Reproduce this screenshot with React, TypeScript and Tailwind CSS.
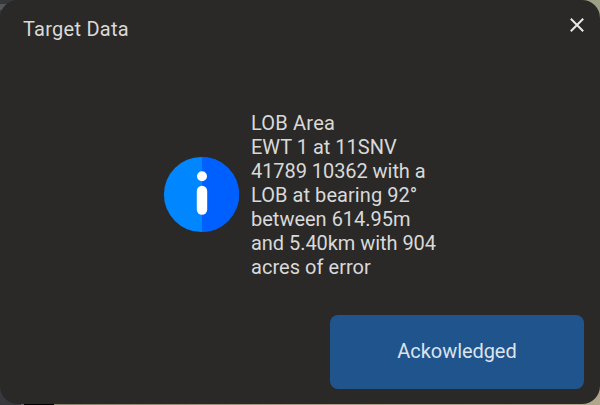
function InfoIcon() {
  return (
    <svg className="block h-[76px] w-[76px] shrink-0" viewBox="0 0 76 76">
      <circle cx="38.4" cy="37.5" r="37.5" fill="#0086ff" />
      <path d="M39 0a37.2 37.5 0 0 1 0 75z" fill="#005fff" />
      <circle cx="39" cy="19.2" r="5" fill="#fff" />
      <rect x="33.8" y="28.8" width="10.4" height="29" rx="5.2" fill="#fff" />
    </svg>
  );
}

const lines = [
  { text: "LOB Area", tracking: "tracking-[0.2px]" },
  { text: "EWT 1 at 11SNV", tracking: "tracking-normal" },
  { text: "41789 10362 with a", tracking: "tracking-[-0.06px]" },
  { text: "LOB at bearing 92°", tracking: "tracking-[0.06px]" },
  { text: "between 614.95m", tracking: "tracking-normal" },
  { text: "and 5.40km with 904", tracking: "tracking-[-0.05px]" },
  { text: "acres of error", tracking: "tracking-[0.04px]" },
];

function Backdrop() {
  return (
    <div className="absolute inset-0 flex flex-col">
      <div className="flex h-[200px] justify-between">
        <div className="w-10 bg-[#353738] pt-1">
          <div className="h-1.5 bg-[#515759]" />
        </div>
        <div className="w-10 bg-[#9da186]" />
      </div>
      <div className="flex grow">
        <div className="w-[21px] bg-[#38393c]" />
        <div className="w-[3px] bg-[#696467]" />
        <div className="w-[30px] bg-black" />
        <div className="grow bg-linear-to-r from-[#85836b] via-[#aa9c86] to-[#b0a68c]" />
      </div>
    </div>
  );
}

export default function App() {
  return (
    <div className="relative h-[405px] w-[600px] overflow-hidden font-['Roboto',sans-serif] text-xl leading-6 text-[#d9d9d9]">
      <Backdrop />
      <div className="relative flex h-[404px] flex-col rounded-[18px] bg-[#2a2927]">
        <header className="flex justify-between pt-[17px] pr-[15px] pl-[23px]">
          <h1 className="tracking-[0.26px]">Target Data</h1>
          <button aria-label="Close" className="h-4 w-4">
            <svg className="block" width="16" height="16" viewBox="0 0 16 16" fill="none" stroke="#e8e8e8" strokeWidth="2">
              <path d="M1.8 1.8l12.4 12.4M14.2 1.8L1.8 14.2" />
            </svg>
          </button>
        </header>
        <main className="mt-[70px] flex items-center pl-[163px]">
          <InfoIcon />
          <div className="ml-3">
            {lines.map(({ text, tracking }) => (
              <p key={text} className={`whitespace-nowrap ${tracking}`}>
                {text}
              </p>
            ))}
          </div>
        </main>
        <footer className="mt-auto flex justify-end pr-4 pb-[15px]">
          <button className="h-[74px] w-[254px] rounded-lg bg-[#20548d] pb-0.5 tracking-[-0.06px] text-[#dce3ec]">
            Ackowledged
          </button>
        </footer>
      </div>
    </div>
  );
}
